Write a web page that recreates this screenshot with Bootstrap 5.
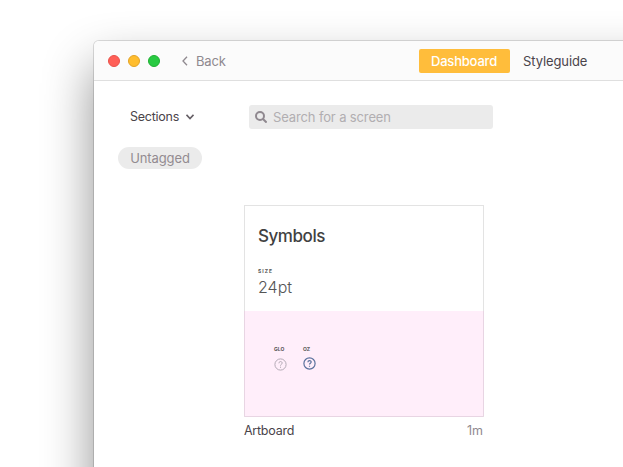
<!DOCTYPE html>
<html lang="en">
<head>
<meta charset="utf-8">
<meta name="viewport" content="width=device-width, initial-scale=1">
<title>Symbols dashboard</title>
<link href="https://cdn.jsdelivr.net/npm/bootstrap@5.3.0/dist/css/bootstrap.min.css" rel="stylesheet">
<style>
body{font-family:Inter,"Liberation Sans",sans-serif;font-size:13px;line-height:20px;color:#4a444a;background:#fff;height:467px}
.stage{height:467px;padding:41px 0 0 94px}
.app-window{width:700px;height:600px;border-radius:5px;background:#fff;box-shadow:0 0 0 1px rgba(0,0,0,.13),0 25px 50px rgba(0,0,0,.44)}
.title-bar{height:40px;background:#fbfbfb;border-bottom:1px solid #dfdfdf;border-radius:5px 5px 0 0;padding-left:14px}
.light{width:12px;height:12px;border-radius:50%;border:1px solid}
.light-r{background:#ff5f57;border-color:#e9514a}
.light-y{background:#ffbd2e;border-color:#e3a325}
.light-g{background:#28ca42;border-color:#1fb032}
.back-link{color:#8f898f;margin-left:22px;width:237px;letter-spacing:-.2px}
.back-link svg{margin-right:8px}
.tab{height:24px;border-radius:2px;line-height:25px;padding:0 12px}
.tab-on{background:#ffbd3b;color:#fff;width:91px;font-weight:500;letter-spacing:-.2px}
.tab-off{padding-left:13px;letter-spacing:-.1px}
.side{width:155px;padding-left:24px}
.sections{padding:26px 0 0 12px;font-size:12.5px}
.sections span{letter-spacing:-.25px;width:48px;white-space:nowrap}
.pill{height:22px;width:84px;line-height:23px;margin-top:20px;border-radius:11px;background:#ebebeb;color:#938b91;letter-spacing:-.1px}
.search-box{width:244px;height:24px;margin-top:24px;border-radius:3px;background:#ebebeb;color:#b1aeb1;padding-left:6px}
.search-text{margin-left:6px;letter-spacing:-.13px;line-height:24px}
.artboard{width:240px;height:212px;margin:76px 0 0 -5px;border:1px solid #e3e3e3;border-bottom-color:#e8d5e3}
.artboard-top{height:105px;padding:19px 0 0 13px}
.heading{font-size:17px;line-height:22px;font-weight:500;color:#414141;letter-spacing:-.45px}
.tiny{font-size:5px;line-height:6px;font-weight:700;color:#555}
.size-label{margin-top:21px;letter-spacing:1px}
.size-value{font-size:16px;line-height:20px;color:#555;margin-top:3px;font-weight:300}
.artboard-pink{height:105px;background:#ffeefa;padding:35px 0 0 29px;box-shadow:-1px 0 #e8d5e3,1px 0 #e8d5e3}
.grey-icon{margin-top:5.5px}
.blue-icon{margin-top:5px}
.caption{width:239px;margin:4px 0 0 -5px;font-size:12.5px}
.caption-name{letter-spacing:-.25px}
.caption-age{color:#8f898f}
</style>
<script src="https://cdn.jsdelivr.net/npm/bootstrap@5.3.0/dist/js/bootstrap.bundle.min.js"></script>
</head>
<body class="overflow-hidden">
<div class="stage overflow-hidden">
<main class="app-window">
<header class="title-bar d-flex align-items-center">
  <div class="d-flex gap-2"><span class="light light-r"></span><span class="light light-y"></span><span class="light light-g"></span></div>
  <div class="back-link d-flex align-items-center"><svg width="6" height="10" viewBox="0 0 6 10" fill="none" stroke="#8f898f" stroke-width="1.3"><path d="M5 .8 1 5l4 4.2"/></svg><span>Back</span></div>
  <nav class="d-flex"><div class="tab tab-on">Dashboard</div><div class="tab tab-off">Styleguide</div></nav>
</header>
<div class="d-flex">
  <aside class="side">
    <div class="sections d-flex align-items-center"><span>Sections</span><svg class="ms-2" width="8" height="6" viewBox="0 0 8 6" fill="none" stroke="#655f65" stroke-width="1.6"><path d="m.5 .8 3.500 3.800L7.500 .8"/></svg></div>
    <div class="pill text-center">Untagged</div>
  </aside>
  <section>
    <div class="search-box d-flex align-items-center"><svg width="12" height="12" viewBox="0 0 12 12" fill="none" stroke="#8f888f" stroke-width="2"><circle cx="5" cy="5" r="4"/><path d="m8 8 3.600 3.600"/></svg><span class="search-text">Search for a screen</span></div>
    <div class="artboard">
      <div class="artboard-top"><div class="heading">Symbols</div><div class="tiny size-label">SIZE</div><div class="size-value">24pt</div></div>
      <div class="artboard-pink d-flex">
        <div><div class="tiny">GLO</div><svg class="d-block grey-icon" width="13" height="13" viewBox="0 0 13 13" fill="none" stroke="#b3aab5"><circle cx="6.500" cy="6.500" r="5.600"/><path d="M4.900 5.300c0-2.400 3.300-2.200 3.300-.2 0 1.200-1.700 1.200-1.700 2.500M6.500 8.700v1.100"/></svg></div>
        <div class="ms-3"><div class="tiny">OZ</div><svg class="d-block blue-icon" width="13" height="13" viewBox="0 0 13 13" fill="none" stroke="#5a719c" stroke-width="1.200"><circle cx="6.500" cy="6.500" r="5.600"/><path d="M4.900 5.300c0-2.400 3.300-2.200 3.300-.2 0 1.200-1.700 1.200-1.700 2.500M6.500 8.700v1.100"/></svg></div>
      </div>
    </div>
    <div class="caption d-flex justify-content-between"><span class="caption-name">Artboard</span><span class="caption-age">1m</span></div>
  </section>
</div>
</main>
</div>
</body>
</html>
